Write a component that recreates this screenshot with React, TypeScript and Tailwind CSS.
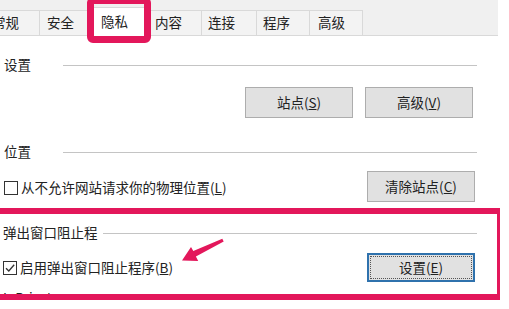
import React from 'react';

const tabs = [
  { label: '常规', className: 'w-[54px] pl-[6px] -ml-[14px]' },
  { label: '安全', className: 'w-[48px] pl-[7px]' },
  { label: '隐私', className: 'w-[62px] pl-[12px]', active: true },
  { label: '内容', className: 'w-[52px] pl-[5px]' },
  { label: '连接', className: 'w-[55px] pl-[6px]' },
  { label: '程序', className: 'w-[53px] pl-[6px]' },
  { label: '高级', className: 'w-[53px] pl-[8px]' },
];

const Checkbox: React.FC<{ checked?: boolean }> = ({ checked }) => (
  <span className="w-[14px] h-[14px] border border-[#333] bg-white flex items-center justify-center shrink-0">
    {checked && (
      <svg width="12" height="12" viewBox="0 0 12 12" fill="none">
        <path d="M2 6.2 L4.8 9 L10.2 2.8" stroke="#333" strokeWidth="1.3" />
      </svg>
    )}
  </span>
);

const Btn: React.FC<{ children: React.ReactNode; className?: string }> = ({ children, className }) => (
  <div className={`h-[31px] bg-[#e1e1e1] border border-[#adadad] flex items-center justify-center ${className ?? ''}`}>
    {children}
  </div>
);

export default function App() {
  return (
    <div
      className="relative w-[509px] h-[309px] bg-white overflow-hidden text-[13.5px] text-[#222] leading-none"
      style={{ fontFamily: '"Noto Sans CJK SC", "Noto Sans", sans-serif' }}
    >
      {/* tab strip */}
      <div className="w-[498px] h-[36px] bg-[#f0f0f0] border-b border-[#d9d9d9] flex items-end">
        {tabs.map((t) =>
          t.active ? (
            <div key={t.label} className={`h-[29px] -mb-px bg-white border-x border-t border-[#d9d9d9] pt-[7px] ${t.className}`}>
              {t.label}
            </div>
          ) : (
            <div key={t.label} className={`h-[25px] border-r border-t border-[#d9d9d9] bg-[#f3f3f3] flex items-center ${t.className}`}>
              {t.label}
            </div>
          )
        )}
      </div>

      {/* 设置 */}
      <div className="mt-[20px] h-[18px] flex items-center pl-[4px]">
        <span className="w-[59px]">设置</span>
        <div className="flex-1 h-px bg-[#c4c4c4] mr-[32px]" />
      </div>
      <div className="mt-[13px] flex justify-end gap-[12px] pr-[36px]">
        <Btn className="w-[108px]">
          站点(<u>S</u>)
        </Btn>
        <Btn className="w-[108px]">
          高级(<u>V</u>)
        </Btn>
      </div>

      {/* 位置 */}
      <div className="mt-[25px] h-[18px] flex items-center pl-[4px]">
        <span className="w-[59px]">位置</span>
        <div className="flex-1 h-px bg-[#c4c4c4] mr-[32px]" />
      </div>
      <div className="mt-[10px] h-[31px] flex items-center justify-between pl-[4px] pr-[34px]">
        <div className="flex items-center gap-[3px] pt-[2px]">
          <Checkbox />
          <span>
            从不允许网站请求你的物理位置(<u>L</u>)
          </span>
        </div>
        <Btn className="w-[108px]">
          清除站点(<u>C</u>)
        </Btn>
      </div>

      {/* 弹出窗口阻止程序 (highlighted) */}
      <div className="mt-[6px] w-[500px] border-t-[6px] border-b-[6px] border-r-[3px] border-[#e3175b]">
        <div className="mt-[10px] h-[18px] flex items-center pl-[3px]">
          <span className="w-[100px]">弹出窗口阻止程</span>
          <div className="flex-1 h-px bg-[#c4c4c4] mr-[20px]" />
        </div>
        <div className="mt-[11px] h-[29px] flex items-center justify-between pl-[3px] pr-[22px]">
          <div className="flex items-center gap-[3px]">
            <Checkbox checked />
            <span>
              启用弹出窗口阻止程序(<u>B</u>)
            </span>
          </div>
          <div className="w-[108px] h-[29px] bg-[#e1e1e1] border-2 border-[#2f72ad] p-px">
            <div className="h-full border border-dotted border-[#555] flex items-center justify-center">
              设置(<u>E</u>)
            </div>
          </div>
        </div>
        <div className="h-[12px] overflow-hidden pl-[3px]">
          <div className="pt-[9px] leading-[13px]">InPrivate</div>
        </div>
      </div>

      {/* annotations */}
      <div className="absolute left-[87px] top-[-3px] w-[64px] h-[46px] border-[7px] border-[#e3175b] rounded-[6px]" />
      <svg className="absolute left-0 top-0 pointer-events-none" width="509" height="309" viewBox="0 0 509 309">
        <polygon
          points="223.7,241.4 195.9,256.5 198.2,261 182,260.5 191,247 193.3,251.1 222.3,238.7"
          fill="#e3175b"
        />
      </svg>
    </div>
  );
}
